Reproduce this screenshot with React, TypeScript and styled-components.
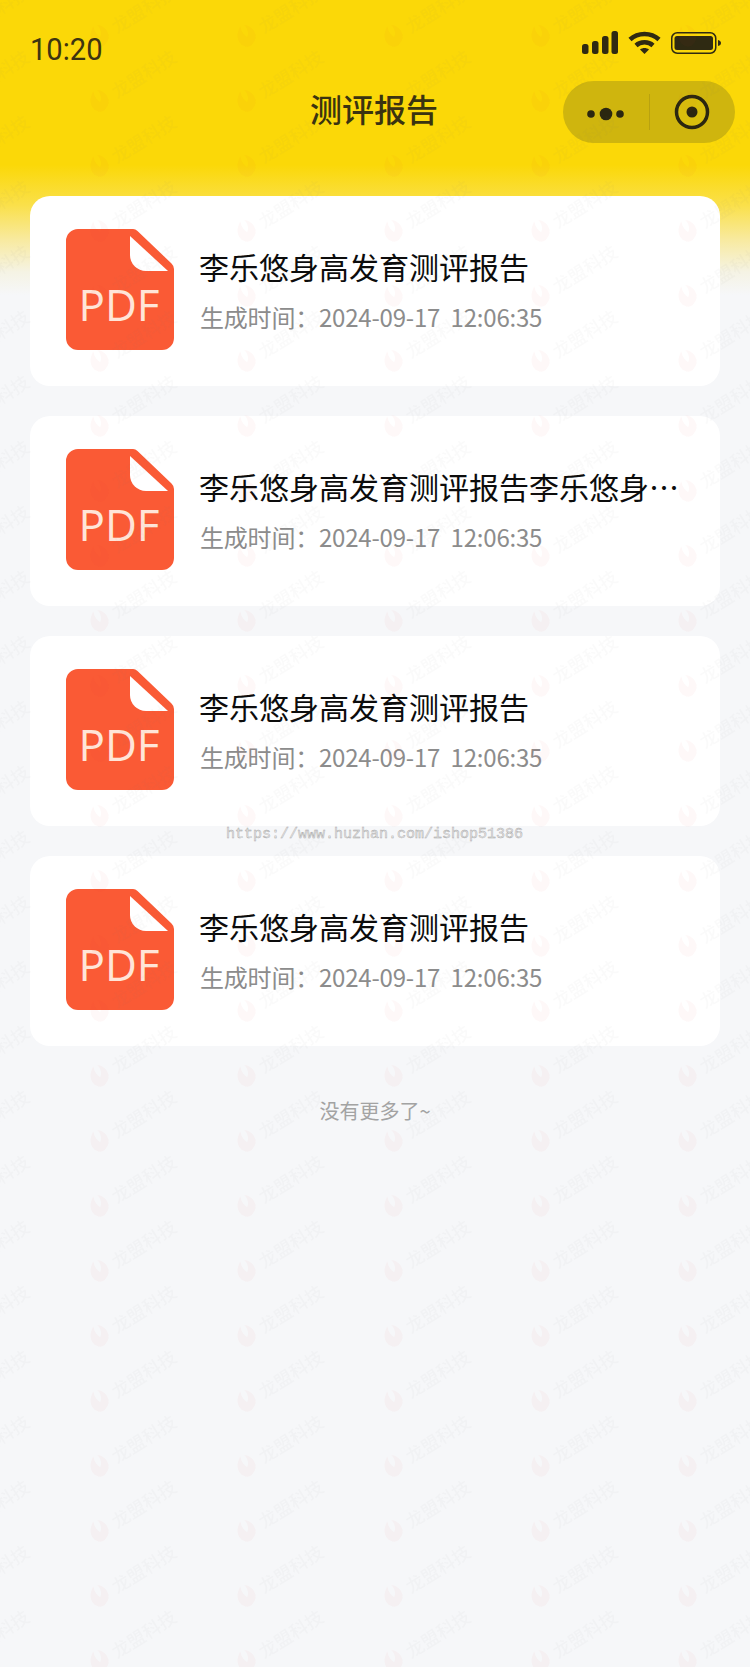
import React from "react";
import styled, { createGlobalStyle } from "styled-components";

const GlobalStyle = createGlobalStyle`
  html, body {
    margin: 0;
    padding: 0;
    background: #f6f7f9;
  }
  * {
    box-sizing: border-box;
  }
`;

const CJK = `"Noto Sans CJK SC", "Noto Sans", sans-serif`;

const Page = styled.div`
  position: relative;
  width: 750px;
  height: 1667px;
  overflow: hidden;
  font-family: ${CJK};
  background: linear-gradient(
    180deg,
    #fbd808 0,
    #fbd808 165px,
    #fae04a 205px,
    #f8eaa0 240px,
    #f5f3e4 272px,
    #f6f7f9 295px
  );
`;

const StatusBar = styled.div`
  height: 81px;
  padding: 29px 29px 0 30px;
  display: flex;
  justify-content: space-between;
  align-items: flex-start;
`;

const Clock = styled.span`
  font-family: "Roboto", sans-serif;
  font-size: 32px;
  line-height: 40px;
  color: #3d3510;
  transform: scaleX(0.91);
  transform-origin: left center;
`;

const StatusIcons = styled.div`
  display: flex;
  align-items: center;
  gap: 10px;
  padding-top: 2px;
`;

const NavBar = styled.div`
  position: relative;
  height: 62px;
  padding: 0 2px 8px 0;
  display: flex;
  align-items: center;
  justify-content: center;
`;

const NavTitle = styled.h1`
  margin: 0;
  font-size: 32px;
  font-weight: 500;
  line-height: 54px;
  color: #3a3310;
`;

const Capsule = styled.div`
  position: absolute;
  right: 15px;
  top: 0;
  width: 172px;
  height: 62px;
  border-radius: 31px;
  background: #cfb50e;
  display: flex;
  align-items: center;
`;

const CapsuleCell = styled.div`
  flex: 1;
  height: 100%;
  display: flex;
  align-items: center;
  justify-content: center;
`;

const CapsuleDivider = styled.div`
  width: 1px;
  height: 36px;
  background: #b9a20f;
`;

const List = styled.div`
  padding: 53px 30px 0;
  display: flex;
  flex-direction: column;
  gap: 30px;
`;

const Card = styled.div`
  height: 190px;
  background: #fff;
  border-radius: 20px;
  padding: 0 30px 3px 36px;
  display: flex;
  align-items: center;
  gap: 25px;
`;

const CardBody = styled.div`
  flex: 1;
  min-width: 0;
`;

const CardTitle = styled.div`
  font-size: 30px;
  line-height: 44px;
  color: #0c0c0c;
  white-space: nowrap;
  overflow: hidden;
  text-overflow: ellipsis;
`;

const CardTime = styled.div`
  margin-top: 11px;
  padding-left: 1px;
  font-size: 24px;
  line-height: 36px;
  letter-spacing: -0.2px;
  color: #8c8c8c;
  white-space: pre;
`;

const EndNote = styled.div`
  margin-top: 50px;
  text-align: center;
  font-size: 20px;
  line-height: 30px;
  color: #a3a3a3;
`;

const SourceUrl = styled.div`
  position: absolute;
  left: 226px;
  top: 825px;
  font-family: "Liberation Mono", monospace;
  font-size: 15px;
  line-height: 20px;
  color: #e6e6e6;
  -webkit-text-stroke: 0.4px #a6a6a6;
`;

const WatermarkLayer = styled.div`
  position: absolute;
  inset: 0;
  pointer-events: none;
  filter: blur(0.7px);
`;

const Stamp = styled.div`
  position: absolute;
  display: flex;
  align-items: center;
  gap: 4px;
  transform: rotate(-32deg);
  transform-origin: left center;
  font-size: 18px;
  font-weight: 500;
  line-height: 24px;
  white-space: nowrap;
  color: rgba(120, 120, 120, 0.04);
`;

const PdfIcon = () => (
  <svg width="108" height="121" viewBox="0 0 108 121">
    <path
      d="M12 0H67Q69.500 0 71.500 2L105.500 34.500Q108 37 108 40V109a12 12 0 0 1-12 12H12A12 12 0 0 1 0 109V12A12 12 0 0 1 12 0Z"
      fill="#fa5a35"
    />
    <path d="M64 7L102 42H80A16 16 0 0 1 64 26Z" fill="#fff" />
    <text
      x="53"
      y="92"
      textAnchor="middle"
      fontFamily="'Open Sans', sans-serif"
      fontSize="44"
      fill="#ffe5d8"
    >
      PDF
    </text>
  </svg>
);

const SignalIcon = () => (
  <svg width="36" height="23" viewBox="0 0 36 23" fill="#2f2a12">
    <rect x="0" y="13" width="6.500" height="10" rx="2.500" />
    <rect x="10" y="10" width="6.500" height="13" rx="2.500" />
    <rect x="20" y="5" width="6.500" height="18" rx="2.500" />
    <rect x="29.500" y="0" width="6.500" height="23" rx="2.500" />
  </svg>
);

const WifiIcon = () => (
  <svg width="33" height="23" viewBox="0 0 33 23" fill="none" stroke="#2f2a12" strokeWidth="4.500">
    <path d="M2 8.500C10 1 23 1 31 8.500" />
    <path d="M8 14.500C12.500 10.300 20.500 10.300 25 14.500" />
    <path d="M12 18.500L16.500 23L21 18.500C18.500 16.500 14.500 16.500 12 18.500Z" fill="#2f2a12" stroke="none" />
  </svg>
);

const BatteryIcon = () => (
  <svg width="50" height="22" viewBox="0 0 50 22">
    <rect x="0.750" y="0.750" width="44" height="20.500" rx="5.500" fill="none" stroke="#2f2a12" strokeWidth="1.500" />
    <rect x="3.500" y="4" width="38.500" height="14" rx="2.500" fill="#2f2a12" />
    <path d="M47 8c2 0.500 3 1.500 3 3s-1 2.500-3 3Z" fill="#2f2a12" />
  </svg>
);

const DotsIcon = () => (
  <svg width="38" height="17" viewBox="0 0 38 17" fill="#2b2710">
    <circle cx="4" cy="10" r="3.800" />
    <circle cx="19" cy="10" r="6.300" />
    <circle cx="33" cy="10" r="3.800" />
  </svg>
);

const TargetIcon = () => (
  <svg width="36" height="36" viewBox="0 0 36 36">
    <circle cx="18" cy="18" r="15.500" fill="#d9bf0c" stroke="#2b2710" strokeWidth="3.500" />
    <circle cx="18" cy="18" r="5.500" fill="#2b2710" />
  </svg>
);

const StampLogo = () => (
  <svg width="24" height="24" viewBox="0 0 24 24" fill="rgba(235, 70, 70, 0.035)">
    <path d="M12 1C5 5 2 10 3 16c1 4 4 7 8 7 6-1 10-5 10-11 0-4-2-8-5-10 1 5 0 9-4 12-2-4-2-8 0-13Z" />
  </svg>
);

const reports = [
  "李乐悠身高发育测评报告",
  "李乐悠身高发育测评报告李乐悠身高发育测评报告",
  "李乐悠身高发育测评报告",
  "李乐悠身高发育测评报告",
];

const stamps: { x: number; y: number }[] = [];
for (let row = 0; row < 26; row++) {
  for (let col = 0; col < 6; col++) {
    stamps.push({ x: col * 147 - 58, y: row * 65 + 30 });
  }
}

export default function App() {
  return (
    <Page>
      <GlobalStyle />
      <StatusBar>
        <Clock>10:20</Clock>
        <StatusIcons>
          <SignalIcon />
          <WifiIcon />
          <BatteryIcon />
        </StatusIcons>
      </StatusBar>
      <NavBar>
        <NavTitle>测评报告</NavTitle>
        <Capsule>
          <CapsuleCell>
            <DotsIcon />
          </CapsuleCell>
          <CapsuleDivider />
          <CapsuleCell>
            <TargetIcon />
          </CapsuleCell>
        </Capsule>
      </NavBar>
      <List>
        {reports.map((title, i) => (
          <Card key={i}>
            <PdfIcon />
            <CardBody>
              <CardTitle>{title}</CardTitle>
              <CardTime>生成时间：2024-09-17  12:06:35</CardTime>
            </CardBody>
          </Card>
        ))}
      </List>
      <EndNote>没有更多了~</EndNote>
      <SourceUrl>https://www.huzhan.com/ishop51386</SourceUrl>
      <WatermarkLayer>
        {stamps.map((s, i) => (
          <Stamp key={i} style={{ left: s.x, top: s.y }}>
            <StampLogo />
            龙盟科技
          </Stamp>
        ))}
      </WatermarkLayer>
    </Page>
  );
}
